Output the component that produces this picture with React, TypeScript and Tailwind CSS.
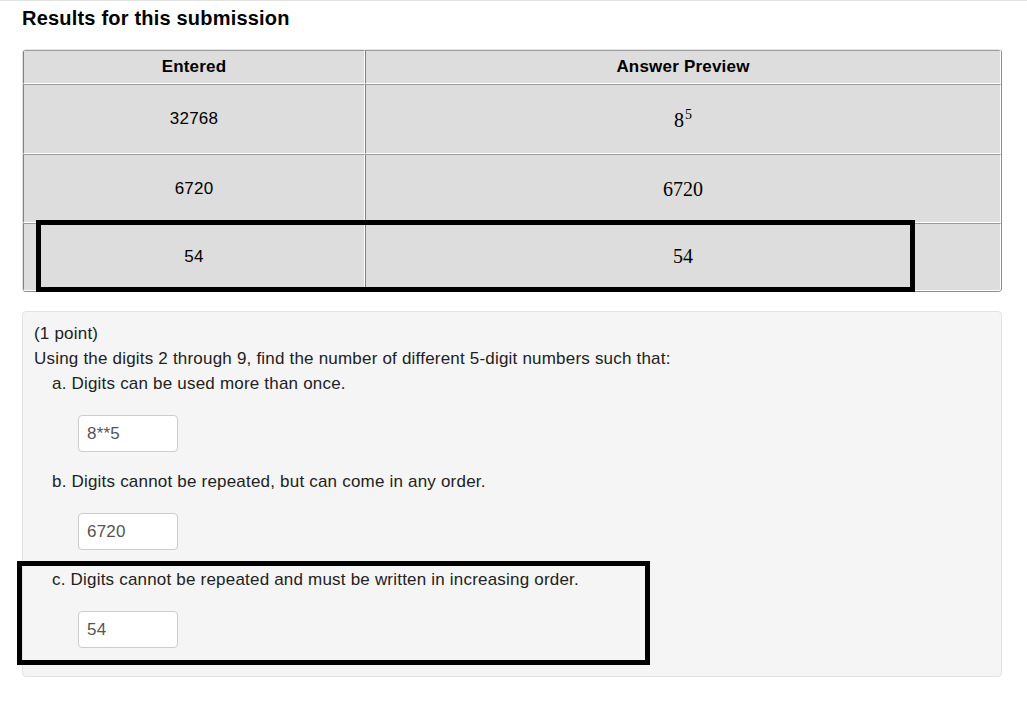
import React from "react";

const cellBase =
  "flex items-center justify-center bg-[#dddddd] border border-t-[#9a9a9a] border-l-[#808080] border-r-white border-b-white";

function Input({ value }: { value: string }) {
  return (
    <div className="ml-[26px] mt-[19px] flex h-[37px] w-[100px] items-center rounded-[4px] border border-[#cccccc] bg-white pl-[8px] text-[17px] tracking-[0.2px] text-[#555555]">
      {value}
    </div>
  );
}

const serif = { fontFamily: '"Liberation Serif", "Times New Roman", serif' };

export default function App() {
  return (
    <div
      className="relative h-[705px] w-[1027px] overflow-hidden border-t border-[#e2e2e2] bg-white text-black"
      style={{ fontFamily: '"Liberation Sans", Arial, sans-serif' }}
    >
      <h2 className="ml-[22px] pt-[6px] text-[20px] font-bold leading-[22px] tracking-[0.2px]">
        Results for this submission
      </h2>

      <div className="ml-[22px] mt-[20px] w-[980px] overflow-hidden rounded-[4px] border border-t-[#e6e6e6] border-l-[#e0e0e0] border-r-[#8c8c8c] border-b-[#8c8c8c]">
        <div className="grid grid-cols-[342px_636px] text-[17px] tracking-[0.2px]">
          <div className={`${cellBase} h-[34px] font-bold`}>Entered</div>
          <div className={`${cellBase} h-[34px] font-bold`}>Answer Preview</div>

          <div className={`${cellBase} h-[70px]`}>32768</div>
          <div className={`${cellBase} h-[70px] text-[20px] tracking-normal`} style={serif}>
            <span className="relative top-[1px]">
              8<sup className="relative top-[-8px] ml-[1px] text-[14px]">5</sup>
            </span>
          </div>

          <div className={`${cellBase} h-[69px]`}>6720</div>
          <div className={`${cellBase} h-[69px] text-[20px] tracking-normal`} style={serif}>
            6720
          </div>

          <div className={`${cellBase} h-[68px]`}>54</div>
          <div className={`${cellBase} h-[68px] text-[20px] tracking-normal`} style={serif}>
            <span className="relative top-[-1px]">54</span>
          </div>
        </div>
      </div>

      <div className="ml-[22px] mt-[19px] w-[980px] rounded-[4px] border border-[#e3e3e3] bg-[#f5f5f5] px-[11px] pb-[28px] pt-[9px] text-[17px] leading-[25px] tracking-[0.2px] text-[#222222]">
        <div>(1 point)</div>
        <div>Using the digits 2 through 9, find the number of different 5-digit numbers such that:</div>
        <div className="ml-[18px]">
          <div>a. Digits can be used more than once.</div>
          <Input value="8**5" />
          <div className="mt-[17px]">b. Digits cannot be repeated, but can come in any order.</div>
          <Input value="6720" />
          <div className="mt-[17px]">c. Digits cannot be repeated and must be written in increasing order.</div>
          <Input value="54" />
        </div>
      </div>

      <div className="pointer-events-none absolute left-[36px] top-[219px] h-[72px] w-[879px] border-[5px] border-black" />
      <div className="pointer-events-none absolute left-[17px] top-[560px] h-[104px] w-[633px] border-[5px] border-black" />
    </div>
  );
}
